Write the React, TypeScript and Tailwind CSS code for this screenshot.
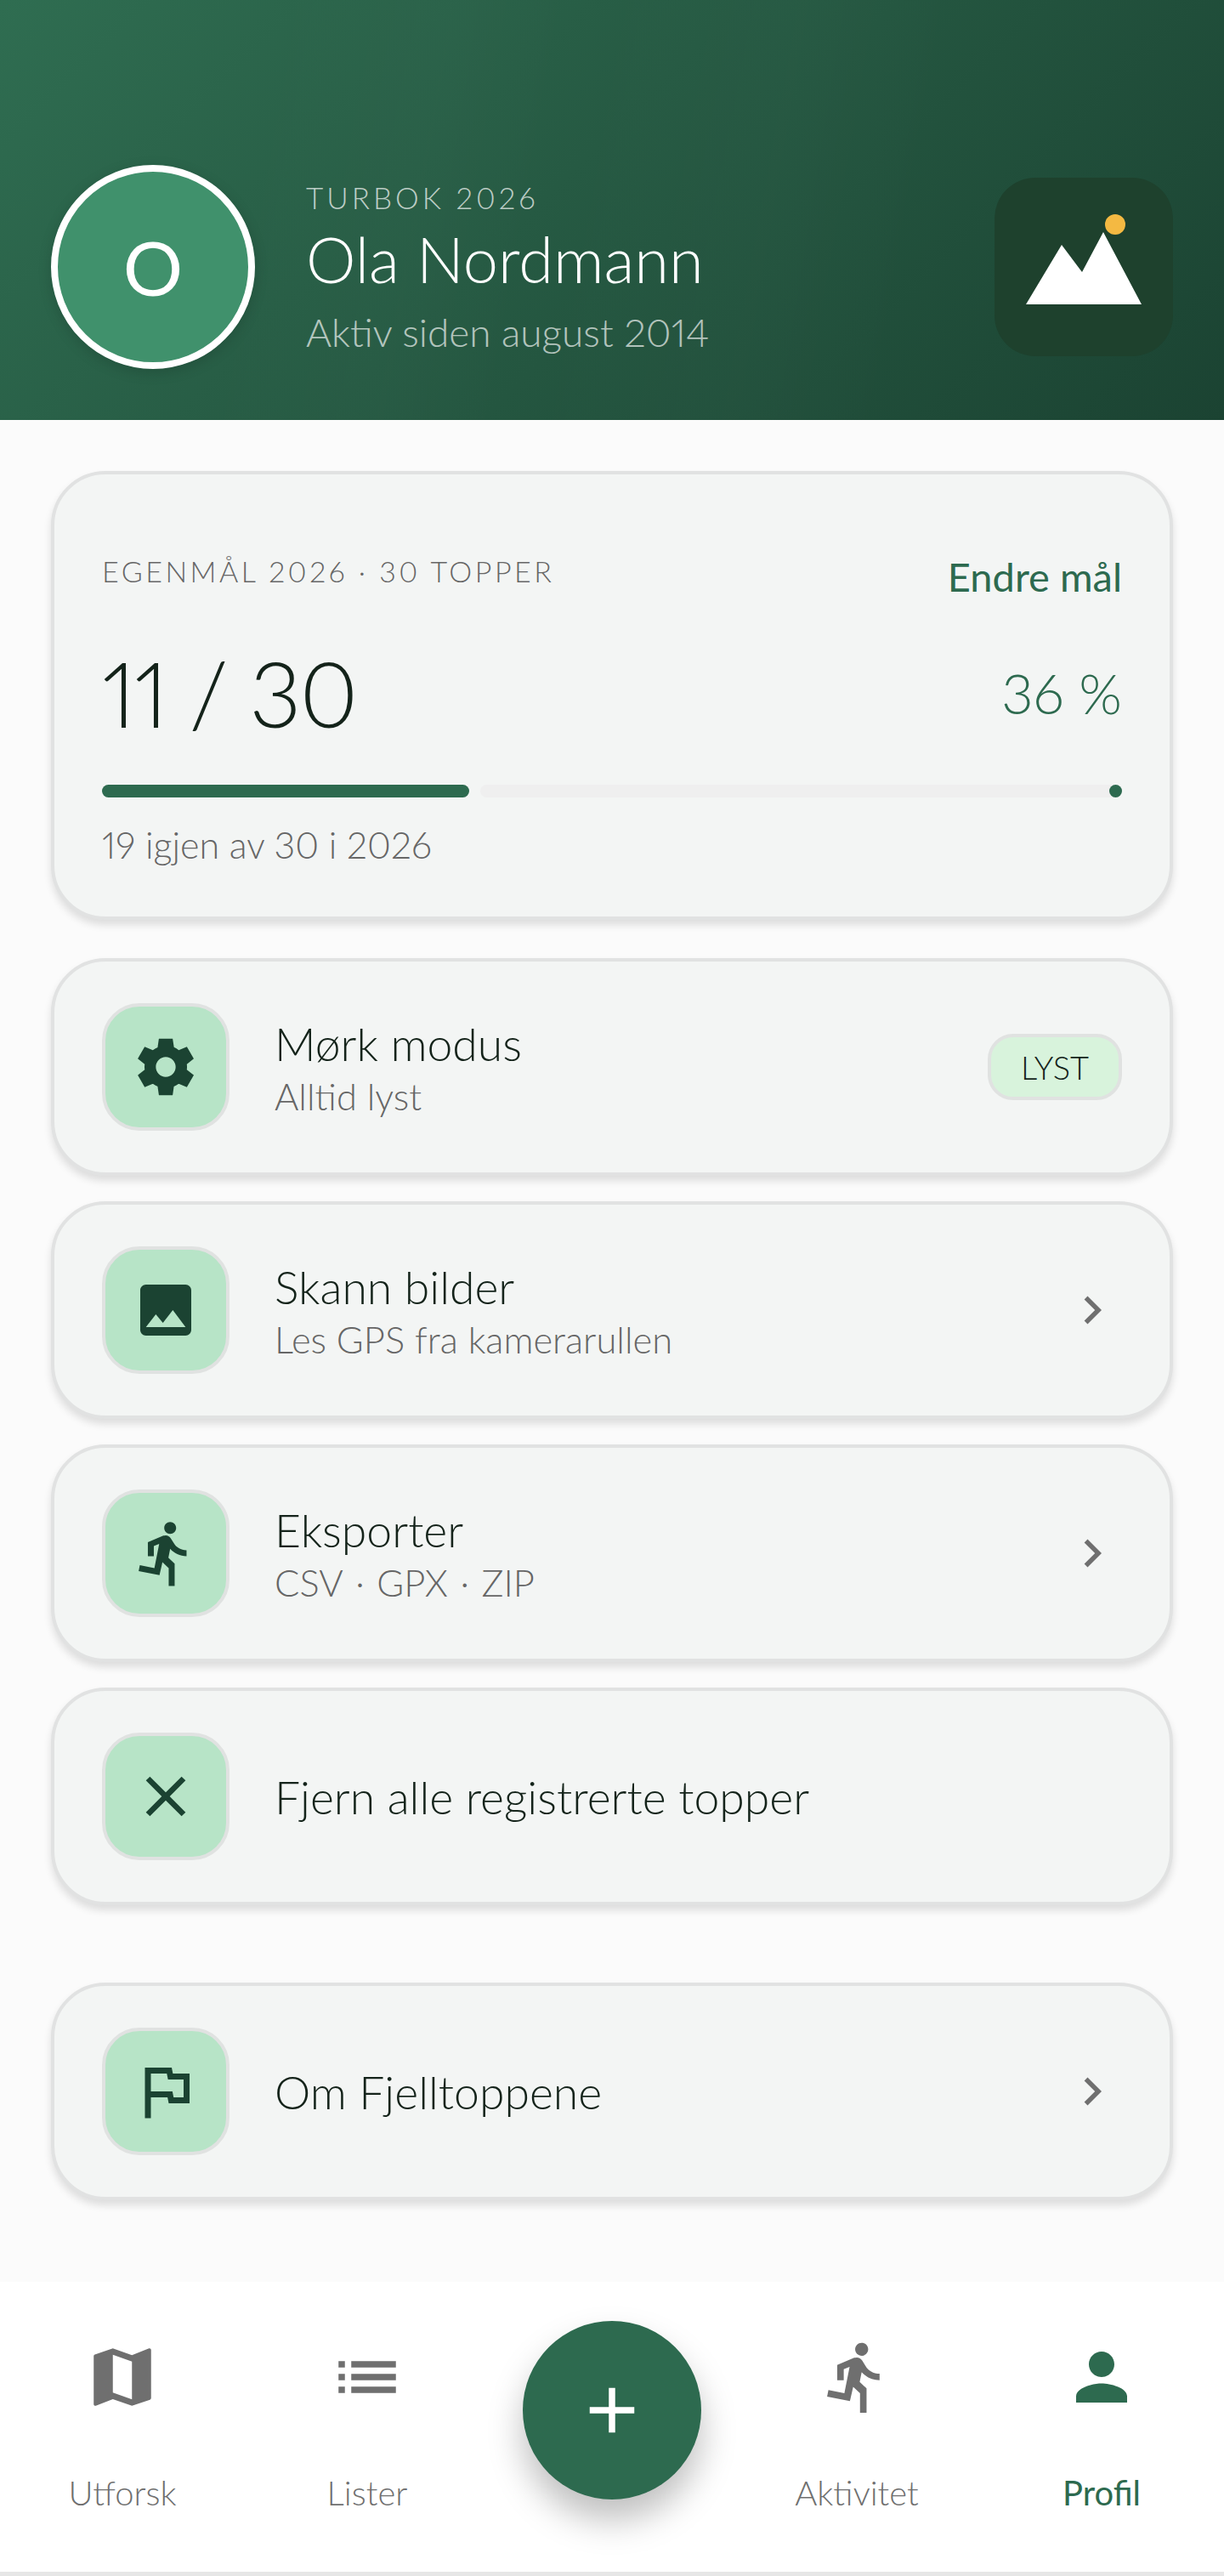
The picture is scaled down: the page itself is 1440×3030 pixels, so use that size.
import type { ReactNode } from "react";
import {
  MdAdd,
  MdChevronRight,
  MdClose,
  MdDirectionsRun,
  MdImage,
  MdList,
  MdMap,
  MdOutlineFlag,
  MdPerson,
} from "react-icons/md";

function GearIcon({ size }: { size: number }) {
  return (
    <svg viewBox="0 0 24 24" width={size} height={size} fill="currentColor">
      <path d="M19.44 12.99l-.01.02c.04-.33.08-.67.08-1.01 0-.34-.03-.66-.07-.99l.01.02 2.44-1.92-2.43-4.22-2.87 1.16.01.01c-.52-.4-1.09-.74-1.71-1h.01L14.44 2H9.57l-.44 3.07h.01c-.62.26-1.19.6-1.71 1l.01-.01-2.88-1.17-2.44 4.22 2.44 1.92.01-.02c-.04.33-.07.65-.07.99 0 .34.03.68.08 1.01l-.01-.02-2.1 1.65-.33.26 2.43 4.2 2.88-1.15-.02-.04c.53.41 1.1.75 1.73 1.01h-.03L9.58 22h4.85s.03-.18.06-.42l.38-2.65h-.01c.62-.26 1.2-.6 1.73-1.01l-.02.04 2.88 1.15 2.43-4.2s-.14-.12-.33-.26l-2.11-1.66zM12 15.5c-1.93 0-3.5-1.57-3.5-3.5s1.57-3.5 3.5-3.5 3.5 1.57 3.5 3.5-1.57 3.5-3.5 3.5z" />
    </svg>
  );
}

function IconTile({ children }: { children: ReactNode }) {
  return (
    <div className="flex h-[150px] w-[150px] shrink-0 items-center justify-center rounded-[44px] border-4 border-[#e0e2e1] bg-[#b7e4c7] text-[#1b4332]">
      {children}
    </div>
  );
}

function Row({
  icon,
  title,
  sub,
  right,
}: {
  icon: ReactNode;
  title: string;
  sub?: string;
  right?: ReactNode;
}) {
  return (
    <div className="flex h-[256px] items-center rounded-[64px] border-4 border-[#e1e2e2] bg-[#f3f5f4] pl-[56px] pr-[56px] shadow-[0_6px_10px_rgba(0,0,0,0.12)]">
      <IconTile>{icon}</IconTile>
      <div className="ml-[53px] min-w-0 flex-1">
        <div className="text-[53.5px] leading-[60px] font-light text-[#14231a]">{title}</div>
        {sub && <div className="mt-[8px] text-[43.5px] leading-[48px] font-light text-[#666666]">{sub}</div>}
      </div>
      {right}
    </div>
  );
}

function NavItem({
  icon,
  label,
  active,
}: {
  icon: ReactNode;
  label: string;
  active?: boolean;
}) {
  return (
    <div className={`flex flex-col items-center ${active ? "text-[#2d6a4f]" : "text-[#6f6f6f]"}`}>
      <div className="flex h-[90px] items-center justify-center">{icon}</div>
      <div className={`mt-[67px] text-[40px] leading-[48px] ${active ? "font-normal" : "font-light"}`}>{label}</div>
    </div>
  );
}

export default function App() {
  return (
    <div className="flex h-[3030px] flex-col bg-[#fbfbfb] font-['Lato',sans-serif] proportional-nums">
      <header className="flex h-[494px] shrink-0 items-end bg-[linear-gradient(100deg,transparent_20%,rgba(255,255,255,0.012)_35%,transparent_45%,rgba(255,255,255,0.012)_62%,transparent_75%),linear-gradient(135deg,#2f6d51,#1b4332)] px-[60px] pb-[60px]">
        <div className="flex w-full items-center">
          <div className="flex h-[240px] w-[240px] shrink-0 items-center justify-center rounded-full border-[8px] border-white bg-[#40916c] text-[88px] text-white shadow-[0_4px_16px_rgba(0,0,0,0.15)]">
            O
          </div>
          <div className="ml-[60px] flex-1">
            <div className="text-[35px] leading-[44px] font-light tracking-[4px] text-white/70">TURBOK 2026</div>
            <div className="mt-[11px] text-[74px] leading-[80px] font-light text-white">Ola Nordmann</div>
            <div className="mt-[18px] text-[46px] leading-[56px] font-light text-white/65">Aktiv siden august 2014</div>
          </div>
          <div className="h-[210px] w-[210px] shrink-0 rounded-[48px] bg-[#1e412d]">
            <svg viewBox="0 0 210 210" className="h-full w-full">
              <polygon points="37,149 79,79 103,111 128,64 173,149" fill="#fff" />
              <circle cx="142" cy="55" r="12" fill="#f4b942" />
            </svg>
          </div>
        </div>
      </header>

      <main className="flex flex-1 flex-col px-[60px] pt-[60px]">
        <section className="h-[528px] rounded-[64px] border-4 border-[#e1e2e2] bg-[#f3f5f4] px-[56px] pt-[92px] shadow-[0_6px_10px_rgba(0,0,0,0.12)]">
          <div className="flex items-start justify-between">
            <div className="text-[34px] leading-[44px] font-light tracking-[3.5px] text-[#666666]">EGENMÅL 2026 · 30 TOPPER</div>
            <div className="mt-[4px] text-[47px] leading-[48px] text-[#2d6a4f]">Endre mål</div>
          </div>
          <div className="mt-[48px] flex items-center justify-between">
            <div className="text-[106px] leading-[130px] font-light tracking-[-2px] text-[#14231a]">11 / 30</div>
            <div className="text-[65px] leading-[80px] font-light text-[#2d6a4f]">36 %</div>
          </div>
          <div className="mt-[43px] flex h-[15px] gap-[13px]">
            <div className="w-[432px] rounded-full bg-[#2d6a4f]" />
            <div className="flex flex-1 justify-end rounded-full bg-[#efefef]">
              <div className="h-[15px] w-[15px] rounded-full bg-[#2d6a4f]" />
            </div>
          </div>
          <div className="mt-[28px] text-[43px] leading-[56px] font-light text-[#666666]">19 igjen av 30 i 2026</div>
        </section>

        <div className="mt-[45px] flex flex-col gap-[30px]">
          <Row
            icon={<GearIcon size={80} />}
            title="Mørk modus"
            sub="Alltid lyst"
            right={
              <div className="flex h-[78px] w-[158px] items-center justify-center rounded-[30px] border-4 border-[#e0e2e1] bg-[#d8f3dc] text-[38px] font-light text-[#14231a]">
                LYST
              </div>
            }
          />
          <Row
            icon={<MdImage size={80} />}
            title="Skann bilder"
            sub="Les GPS fra kamerarullen"
            right={<MdChevronRight size={66} className="mr-[2px] text-[#6f6f6f]" />}
          />
          <Row
            icon={<MdDirectionsRun size={84} />}
            title="Eksporter"
            sub={"CSV\u200A · \u200AGPX\u200A · \u200AZIP"}
            right={<MdChevronRight size={66} className="mr-[2px] text-[#6f6f6f]" />}
          />
          <Row icon={<MdClose size={80} />} title="Fjern alle registrerte topper" />
        </div>

        <div className="mt-[91px]">
          <Row
            icon={<MdOutlineFlag size={84} />}
            title="Om Fjelltoppene"
            right={<MdChevronRight size={66} className="mr-[2px] text-[#6f6f6f]" />}
          />
        </div>
      </main>

      <nav className="h-[346px] shrink-0 border-b-[5px] border-[#e6e6e6] bg-white">
        <div className="grid grid-cols-5 items-start">
          <div className="pt-[67px]"><NavItem icon={<MdMap size={90} />} label="Utforsk" /></div>
          <div className="pt-[67px]"><NavItem icon={<MdList size={90} />} label="Lister" /></div>
          <div className="flex justify-center pt-[46px]">
            <div className="flex h-[210px] w-[210px] items-center justify-center rounded-full bg-[#2d6a4f] text-white shadow-[0_24px_40px_rgba(0,0,0,0.25)]">
              <MdAdd size={90} />
            </div>
          </div>
          <div className="pt-[67px]"><NavItem icon={<MdDirectionsRun size={92} />} label="Aktivitet" /></div>
          <div className="pt-[67px]"><NavItem icon={<MdPerson size={90} />} label="Profil" active /></div>
        </div>
      </nav>
    </div>
  );
}
